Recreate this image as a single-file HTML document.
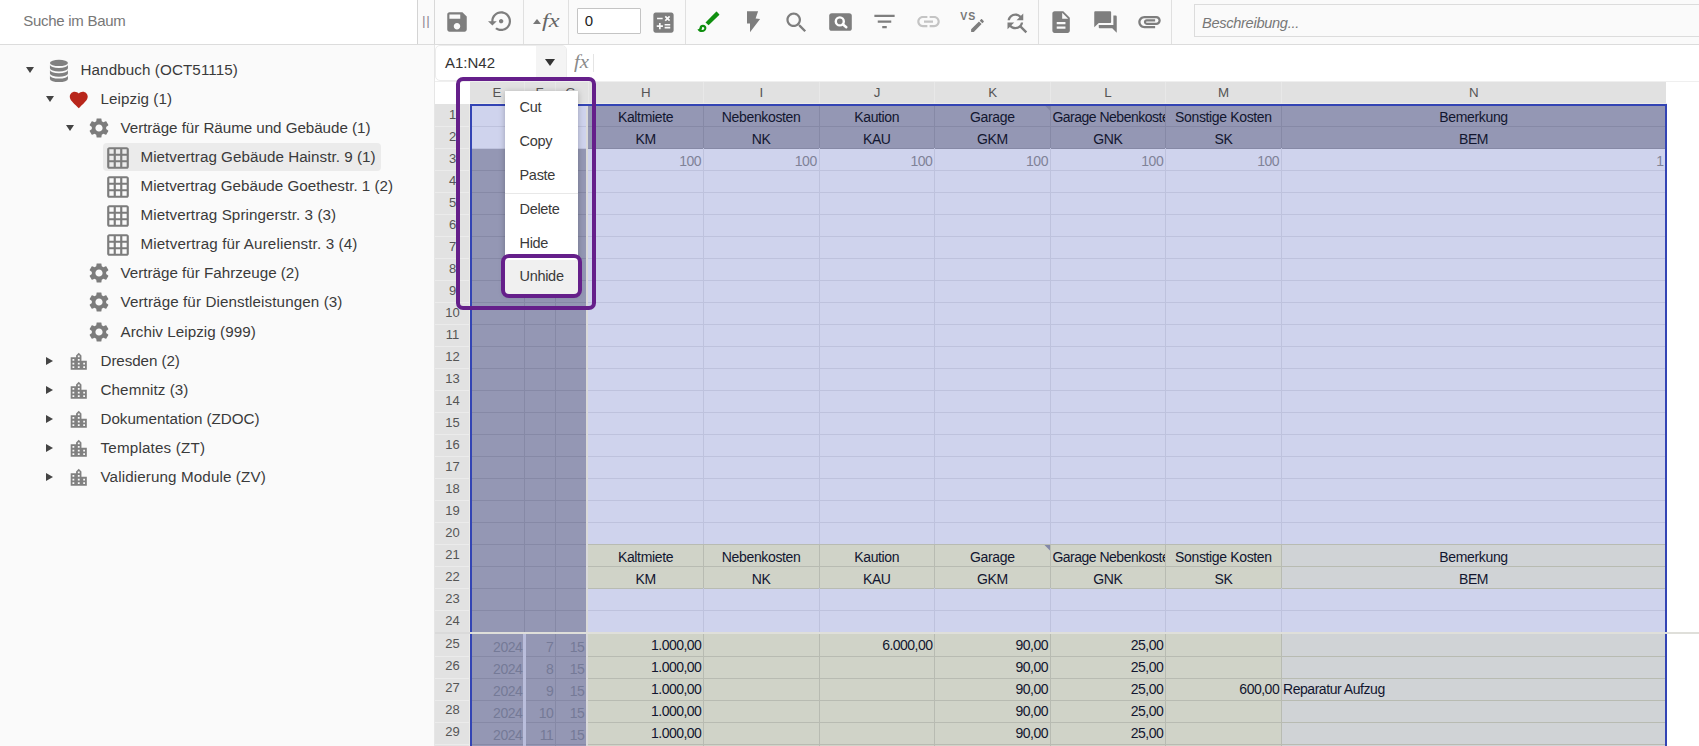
<!DOCTYPE html>
<html lang="de"><head><meta charset="utf-8"><title>Handbuch</title>
<style>
html,body{margin:0;padding:0}
body{width:1699px;height:746px;overflow:hidden;position:relative;background:#fafafa;font-family:"Liberation Sans",sans-serif;color:#333}
.abs,.ic,.t,.c,.ln{position:absolute}
.ic{display:block}
.t{white-space:nowrap;line-height:1}
.tree{font-size:15.2px;color:#3a3a3a;letter-spacing:0}
.c{white-space:nowrap;overflow:hidden;font-size:13.33px;line-height:22px;color:#12162f;box-sizing:border-box}
.hd{font-size:13.33px;color:#555;text-align:center;line-height:22px}
.mi{position:absolute;left:0;width:73px;height:34px;line-height:32px;padding-left:14.5px;box-sizing:border-box;font-size:14.5px;letter-spacing:-0.3px;color:#3a3a3a}
</style></head><body>

<div class="abs" style="left:0;top:0;width:1699px;height:44px;background:#fafafa;border-bottom:1px solid #dcdcdc"></div>
<div class="abs" style="left:0;top:0;width:417px;height:44px;background:#fff"></div>
<div class="abs" style="left:417px;top:0;width:1px;height:44px;background:#d4d4d4"></div>
<div class="abs" style="left:434px;top:45px;width:1px;height:701px;background:#e6e6e6"></div>
<div class="abs" style="left:434px;top:0;width:1px;height:44px;background:#d8d8d8"></div>
<div class="t" style="left:23.300px;top:13px;font-size:15px;letter-spacing:-0.28px;color:#777">Suche im Baum</div>
<div class="t" style="left:422.000px;top:14.000px;font-size:13.7px;color:#8e8694;letter-spacing:0.7px">||</div>
<div class="abs" style="left:523px;top:0;width:1px;height:44px;background:#e0e0e0"></div>
<div class="abs" style="left:568px;top:0;width:1px;height:44px;background:#e0e0e0"></div>
<div class="abs" style="left:685px;top:0;width:1px;height:44px;background:#e0e0e0"></div>
<div class="abs" style="left:1038px;top:0;width:1px;height:44px;background:#e0e0e0"></div>
<div class="abs" style="left:1171px;top:0;width:1px;height:44px;background:#e0e0e0"></div>
<svg class="ic" style="left:444.00px;top:9.00px;width:26px;height:26px" viewBox="0 0 24 24"><path fill="#7e7e7e" d="M17 3H5c-1.11 0-2 .9-2 2v14c0 1.1.89 2 2 2h14c1.1 0 2-.9 2-2V7l-4-4zm-5 16c-1.66 0-3-1.34-3-3s1.34-3 3-3 3 1.34 3 3-1.34 3-3 3zm3-10H5V5h10v4z"/></svg>
<svg class="ic" style="left:487.95px;top:8.45px;width:26.3px;height:26.3px" viewBox="0 0 24 24"><path fill="#7e7e7e" d="M14 12c0-1.1-.9-2-2-2s-2 .9-2 2 .9 2 2 2 2-.9 2-2zm-2-9c-4.97 0-9 4.03-9 9H0l4 4 4-4H5c0-3.87 3.13-7 7-7s7 3.13 7 7-3.13 7-7 7c-1.51 0-2.91-.49-4.06-1.3l-1.42 1.44C8.04 20.3 9.94 21 12 21c4.97 0 9-4.03 9-9s-4.03-9-9-9z"/></svg>
<div class="abs" style="left:533.3px;top:19px;width:0;height:0;border-left:4px solid transparent;border-right:4px solid transparent;border-bottom:5px solid #777"></div>
<div class="t" style="left:541.500px;top:11px;font-family:'Liberation Serif',serif;font-style:italic;font-size:19.5px;color:#666;transform:scaleX(1.25);transform-origin:0 0">fx</div>
<div class="abs" style="left:577px;top:8px;width:62px;height:24px;border:1px solid #c4c4c4;background:#fff;border-radius:1px"></div>
<div class="t" style="left:584.700px;top:13px;font-size:15px;color:#222">0</div>
<svg class="ic" style="left:649.50px;top:8.50px;width:27px;height:27px" viewBox="0 0 24 24"><path fill="#7e7e7e" d="M19 3H5c-1.1 0-2 .9-2 2v14c0 1.1.9 2 2 2h14c1.1 0 2-.9 2-2V5c0-1.1-.9-2-2-2zm-5.97 4.06L14.09 6l1.41 1.41L16.91 6l1.06 1.06-1.41 1.41 1.41 1.41-1.06 1.06-1.41-1.4-1.41 1.41-1.06-1.06 1.41-1.41-1.41-1.42zm-6.78.66h5v1.5h-5v-1.5zM11.5 16h-2v2H8v-2H6v-1.5h2v-2h1.5v2h2V16zm6.500 1.25h-5v-1.5h5v1.5zm0-2.5h-5v-1.5h5v1.5z"/></svg>
<svg class="ic" style="left:690px;top:5px;width:40px;height:35px" viewBox="0 0 40 35"><g fill="#0f8f0f"><path d="M26.1 6.800 Q26.600 6.400 27.100 6.900 L29.200 9.200 Q29.600 9.700 29.200 10.100 L18.600 20.300 L15.500 17.400 Z"/><path fill-rule="evenodd" d="M12.900 19.700 C15.100 19.700 16.400 21.300 16.400 23.100 C16.400 25.300 14.600 27.100 12.000 27.100 C9.900 27.100 8.300 26.100 7.400 24.500 C8.600 24.500 9.500 23.900 9.600 22.600 C9.700 21.000 11.000 19.700 12.900 19.700 Z M12.300 21.900 L11.500 24.900 C13.300 25.300 14.300 24.300 14.300 23.300 C14.300 22.400 13.500 21.800 12.300 21.900 Z"/></g></svg>
<svg class="ic" style="left:740px;top:5px;width:30px;height:35px" viewBox="0 0 30 35"><path fill="#7e7e7e" d="M7 6.200H18.100L15.600 13.600L20.100 14L10 27.300V18.600H7Z"/></svg>
<svg class="ic" style="left:782.50px;top:8.50px;width:27px;height:27px" viewBox="0 0 24 24"><path fill="#7e7e7e" d="M15.5 14h-.79l-.28-.27C15.41 12.59 16 11.11 16 9.5 16 5.91 13.09 3 9.5 3S3 5.91 3 9.5 5.91 16 9.5 16c1.61 0 3.09-.59 4.23-1.57l.27.28v.79l5 4.99L20.49 19l-4.99-5zm-6 0C7.01 14 5 11.99 5 9.5S7.01 5 9.5 5 14 7.01 14 9.5 11.99 14 9.5 14z"/></svg>
<svg class="ic" style="left:828px;top:10px;width:25px;height:24px" viewBox="0 0 25 24"><rect x="1.200" y="3.200" width="22.600" height="17.600" rx="2.600" fill="#7e7e7e"/><circle cx="11.800" cy="11.400" r="4" fill="none" stroke="#fff" stroke-width="2.400"/><path d="M14.800 14.300 L18.300 17.300" stroke="#fff" stroke-width="2.500" stroke-linecap="round"/></svg>
<svg class="ic" style="left:870.50px;top:8.20px;width:27px;height:27px" viewBox="0 0 24 24"><path fill="#7e7e7e" d="M10 18h4v-2h-4v2zM3 6v2h18V6H3zm3 7h12v-2H6v2z"/></svg>
<svg class="ic" style="left:914.50px;top:8.00px;width:27px;height:27px" viewBox="0 0 24 24"><path fill="#c4c4c4" d="M3.9 12c0-1.71 1.39-3.1 3.1-3.1h4V7H7c-2.76 0-5 2.24-5 5s2.24 5 5 5h4v-1.9H7c-1.71 0-3.1-1.39-3.1-3.1zM8 13h8v-2H8v2zm9-6h-4v1.9h4c1.71 0 3.1 1.39 3.1 3.1s-1.39 3.1-3.1 3.1h-4V17h4c2.76 0 5-2.24 5-5s-2.24-5-5-5z"/></svg>
<div class="t" style="left:960.300px;top:10.700px;font-size:10.5px;font-weight:bold;color:#777;letter-spacing:1px">VS</div>
<svg class="ic" style="left:969.30px;top:16.70px;width:17px;height:17px" viewBox="0 0 24 24"><path fill="#7e7e7e" d="M3 17.25V21h3.75L17.81 9.94l-3.75-3.75L3 17.25zM20.71 7.04c.39-.39.39-1.02 0-1.41l-2.34-2.34c-.39-.39-1.02-.39-1.41 0l-1.83 1.83 3.75 3.75 1.83-1.83z"/></svg>
<svg class="ic" style="left:1002.50px;top:8.50px;width:27px;height:27px" viewBox="0 0 24 24"><path fill="#7e7e7e" d="M11 6c1.38 0 2.63.56 3.54 1.46L12 10h6V4l-2.05 2.05C14.68 4.78 12.93 4 11 4c-3.53 0-6.43 2.61-6.92 6H6.1c.46-2.28 2.48-4 4.9-4zm5.64 9.14c.66-.9 1.12-1.97 1.28-3.14H15.9c-.46 2.28-2.48 4-4.9 4-1.38 0-2.63-.56-3.54-1.46L10 12H4v6l2.05-2.05C7.32 17.22 9.07 18 11 18c1.55 0 2.98-.51 4.14-1.36L20 21.49 21.49 20l-4.85-4.860z"/></svg>
<svg class="ic" style="left:1047.90px;top:8.75px;width:26.2px;height:26.2px" viewBox="0 0 24 24"><path fill="#7e7e7e" d="M14 2H6c-1.1 0-1.99.9-1.99 2L4 20c0 1.1.89 2 1.99 2H18c1.1 0 2-.9 2-2V8l-6-6zm2 16H8v-2h8v2zm0-4H8v-2h8v2zm-3-5V3.5L18.5 9H13z"/></svg>
<svg class="ic" style="left:1091.500px;top:8.700px;width:27px;height:25.8px" viewBox="0 0 24 24" preserveAspectRatio="none"><path fill="#7e7e7e" d="M21 6h-2v9H6v2c0 .55.45 1 1 1h11l4 4V7c0-.55-.45-1-1-1zm-4 6V3c0-.55-.45-1-1-1H3c-.55 0-1 .45-1 1v14l4-4h10c.55 0 1-.45 1-1z"/></svg>
<svg class="ic" style="left:1135.50px;top:8.00px;width:27px;height:27px" viewBox="0 0 24 24"><path fill="#7e7e7e" d="M2 12.5C2 9.46 4.46 7 7.5 7H18c2.21 0 4 1.79 4 4s-1.79 4-4 4H9.5C8.12 15 7 13.88 7 12.5S8.12 10 9.5 10H17v2H9.41c-.55 0-.55 1 0 1H18c1.1 0 2-.9 2-2s-.9-2-2-2H7.5C5.57 9 4 10.57 4 12.5S5.57 16 7.5 16H17v2H7.5C4.46 18 2 15.54 2 12.5z"/></svg>
<div class="abs" style="left:1194px;top:4px;width:520px;height:32.5px;border:1px solid #dcdcdc;background:#fafafa;box-sizing:border-box"></div>
<div class="t" style="left:1202px;top:16.400px;font-size:14.6px;letter-spacing:-0.3px;font-style:italic;color:#777">Beschreibung...</div>
<div class="abs" style="left:103px;top:143px;width:278px;height:28px;background:#ebebeb;border-radius:4px"></div>
<div class="abs" style="left:25.5px;top:67.0px;width:0;height:0;border-left:4.5px solid transparent;border-right:4.5px solid transparent;border-top:6.5px solid #444"></div>
<svg class="ic" style="left:44px;top:55.35px;width:32px;height:32px" viewBox="0 0 32 32"><g fill="#808080"><ellipse cx="14.94" cy="7.900" rx="9.0" ry="3.18"/><path d="M5.94 9.7 A9.0 3.18 0 0 0 23.94 9.7 L23.94 13.3 A9.0 3.18 0 0 1 5.94 13.3 Z"/><path d="M5.94 15.05 A9.0 3.18 0 0 0 23.94 15.05 L23.94 18.6 A9.0 3.18 0 0 1 5.94 18.6 Z"/><path d="M5.94 20.4 A9.0 3.18 0 0 0 23.94 20.4 L23.94 23.9 A9.0 3.18 0 0 1 5.94 23.9 Z"/></g></svg>
<div class="t tree" style="left:80.5px;top:61.6px;letter-spacing:0.097px">Handbuch (OCT51115)</div>
<div class="abs" style="left:45.5px;top:96.0px;width:0;height:0;border-left:4.5px solid transparent;border-right:4.5px solid transparent;border-top:6.5px solid #444"></div>
<svg class="ic" style="left:68.35px;top:89.05px;width:21.5px;height:21.5px" viewBox="0 0 24 24"><path fill="#b8261b" d="M12 21.35l-1.45-1.32C5.4 15.36 2 12.28 2 8.5 2 5.42 4.42 3 7.5 3c1.74 0 3.41.81 4.5 2.09C13.09 3.81 14.76 3 16.5 3 19.58 3 22 5.42 22 8.5c0 3.78-3.4 6.86-8.55 11.54L12 21.35z"/></svg>
<div class="t tree" style="left:100.5px;top:90.6px;letter-spacing:0.065px">Leipzig (1)</div>
<div class="abs" style="left:65.5px;top:125.0px;width:0;height:0;border-left:4.5px solid transparent;border-right:4.5px solid transparent;border-top:6.5px solid #444"></div>
<svg class="ic" style="left:87.00px;top:116.30px;width:24px;height:24px" viewBox="0 0 24 24"><path fill="#7c7c7c" d="M19.14 12.94c.04-.3.06-.61.06-.94 0-.32-.02-.64-.07-.94l2.03-1.58c.18-.14.23-.41.12-.61l-1.92-3.32c-.12-.22-.37-.29-.59-.22l-2.39.96c-.5-.38-1.03-.7-1.62-.94l-.36-2.54c-.04-.24-.24-.41-.48-.41h-3.84c-.24 0-.43.17-.47.41l-.36 2.54c-.59.24-1.13.57-1.62.94l-2.39-.96c-.22-.08-.47 0-.59.22L2.74 8.87c-.12.21-.08.47.12.61l2.03 1.58c-.05.3-.09.63-.09.94s.02.64.07.94l-2.03 1.58c-.18.14-.23.41-.12.61l1.92 3.32c.12.22.37.29.59.22l2.39-.96c.5.38 1.03.7 1.62.94l.36 2.54c.05.24.24.41.48.41h3.84c.24 0 .44-.17.47-.41l.36-2.54c.59-.24 1.13-.56 1.62-.94l2.39.96c.22.08.47 0 .59-.22l1.92-3.32c.12-.22.07-.47-.12-.61l-2.01-1.58zM12 15.6c-1.98 0-3.6-1.62-3.6-3.6s1.62-3.6 3.6-3.6 3.6 1.620 3.6 3.6-1.62 3.6-3.6 3.6z"/></svg>
<div class="t tree" style="left:120.5px;top:119.6px;letter-spacing:-0.050px">Verträge für Räume und Gebäude (1)</div>
<svg class="ic" style="left:104.80px;top:144.90px;width:26px;height:26px" viewBox="0 0 24 24"><path fill="#7c7c7c" d="M20 2H4c-1.1 0-2 .9-2 2v16c0 1.1.9 2 2 2h16c1.1 0 2-.9 2-2V4c0-1.1-.9-2-2-2zM8 20H4v-4h4v4zm0-6H4v-4h4v4zm0-6H4V4h4v4zm6 12h-4v-4h4v4zm0-6h-4v-4h4v4zm0-6h-4V4h4v4zm6 12h-4v-4h4v4zm0-6h-4v-4h4v4zm0-6h-4V4h4v4z"/></svg>
<div class="t tree" style="left:140.5px;top:148.6px;letter-spacing:0.037px">Mietvertrag Gebäude Hainstr. 9 (1)</div>
<svg class="ic" style="left:104.80px;top:173.90px;width:26px;height:26px" viewBox="0 0 24 24"><path fill="#7c7c7c" d="M20 2H4c-1.1 0-2 .9-2 2v16c0 1.1.9 2 2 2h16c1.1 0 2-.9 2-2V4c0-1.1-.9-2-2-2zM8 20H4v-4h4v4zm0-6H4v-4h4v4zm0-6H4V4h4v4zm6 12h-4v-4h4v4zm0-6h-4v-4h4v4zm0-6h-4V4h4v4zm6 12h-4v-4h4v4zm0-6h-4v-4h4v4zm0-6h-4V4h4v4z"/></svg>
<div class="t tree" style="left:140.5px;top:177.6px;letter-spacing:0.005px">Mietvertrag Gebäude Goethestr. 1 (2)</div>
<svg class="ic" style="left:104.80px;top:202.90px;width:26px;height:26px" viewBox="0 0 24 24"><path fill="#7c7c7c" d="M20 2H4c-1.1 0-2 .9-2 2v16c0 1.1.9 2 2 2h16c1.1 0 2-.9 2-2V4c0-1.1-.9-2-2-2zM8 20H4v-4h4v4zm0-6H4v-4h4v4zm0-6H4V4h4v4zm6 12h-4v-4h4v4zm0-6h-4v-4h4v4zm0-6h-4V4h4v4zm6 12h-4v-4h4v4zm0-6h-4v-4h4v4zm0-6h-4V4h4v4z"/></svg>
<div class="t tree" style="left:140.5px;top:206.6px;letter-spacing:0.081px">Mietvertrag Springerstr. 3 (3)</div>
<svg class="ic" style="left:104.80px;top:231.90px;width:26px;height:26px" viewBox="0 0 24 24"><path fill="#7c7c7c" d="M20 2H4c-1.1 0-2 .9-2 2v16c0 1.1.9 2 2 2h16c1.1 0 2-.9 2-2V4c0-1.1-.9-2-2-2zM8 20H4v-4h4v4zm0-6H4v-4h4v4zm0-6H4V4h4v4zm6 12h-4v-4h4v4zm0-6h-4v-4h4v4zm0-6h-4V4h4v4zm6 12h-4v-4h4v4zm0-6h-4v-4h4v4zm0-6h-4V4h4v4z"/></svg>
<div class="t tree" style="left:140.5px;top:235.6px;letter-spacing:0.127px">Mietvertrag für Aurelienstr. 3 (4)</div>
<svg class="ic" style="left:87.00px;top:261.30px;width:24px;height:24px" viewBox="0 0 24 24"><path fill="#7c7c7c" d="M19.14 12.94c.04-.3.06-.61.06-.94 0-.32-.02-.64-.07-.94l2.03-1.58c.18-.14.23-.41.12-.61l-1.92-3.32c-.12-.22-.37-.29-.59-.22l-2.39.96c-.5-.38-1.03-.7-1.62-.94l-.36-2.54c-.04-.24-.24-.41-.48-.41h-3.84c-.24 0-.43.17-.47.41l-.36 2.54c-.59.24-1.13.57-1.62.94l-2.39-.96c-.22-.08-.47 0-.59.22L2.74 8.87c-.12.21-.08.47.12.61l2.03 1.58c-.05.3-.09.63-.09.94s.02.64.07.94l-2.03 1.58c-.18.14-.23.41-.12.61l1.92 3.32c.12.22.37.29.59.22l2.39-.96c.5.38 1.03.7 1.62.94l.36 2.54c.05.24.24.41.48.41h3.84c.24 0 .44-.17.47-.41l.36-2.54c.59-.24 1.13-.56 1.62-.94l2.39.96c.22.08.47 0 .59-.22l1.92-3.32c.12-.22.07-.47-.12-.61l-2.01-1.58zM12 15.6c-1.98 0-3.6-1.62-3.6-3.6s1.62-3.6 3.6-3.6 3.6 1.620 3.6 3.6-1.62 3.6-3.6 3.6z"/></svg>
<div class="t tree" style="left:120.5px;top:264.6px;letter-spacing:-0.005px">Verträge für Fahrzeuge (2)</div>
<svg class="ic" style="left:87.00px;top:290.30px;width:24px;height:24px" viewBox="0 0 24 24"><path fill="#7c7c7c" d="M19.14 12.94c.04-.3.06-.61.06-.94 0-.32-.02-.64-.07-.94l2.03-1.58c.18-.14.23-.41.12-.61l-1.92-3.32c-.12-.22-.37-.29-.59-.22l-2.39.96c-.5-.38-1.03-.7-1.62-.94l-.36-2.54c-.04-.24-.24-.41-.48-.41h-3.84c-.24 0-.43.17-.47.41l-.36 2.54c-.59.24-1.13.57-1.62.94l-2.39-.96c-.22-.08-.47 0-.59.22L2.74 8.87c-.12.21-.08.47.12.61l2.03 1.58c-.05.3-.09.63-.09.94s.02.64.07.94l-2.03 1.58c-.18.14-.23.41-.12.61l1.92 3.32c.12.22.37.29.59.22l2.39-.96c.5.38 1.03.7 1.62.94l.36 2.54c.05.24.24.41.48.41h3.84c.24 0 .44-.17.47-.41l.36-2.54c.59-.24 1.13-.56 1.62-.94l2.39.96c.22.08.47 0 .59-.22l1.92-3.32c.12-.22.07-.47-.12-.61l-2.01-1.58zM12 15.6c-1.98 0-3.6-1.62-3.6-3.6s1.62-3.6 3.6-3.6 3.6 1.620 3.6 3.6-1.62 3.6-3.6 3.6z"/></svg>
<div class="t tree" style="left:120.5px;top:293.6px;letter-spacing:0.102px">Verträge für Dienstleistungen (3)</div>
<svg class="ic" style="left:87.00px;top:320.30px;width:24px;height:24px" viewBox="0 0 24 24"><path fill="#7c7c7c" d="M19.14 12.94c.04-.3.06-.61.06-.94 0-.32-.02-.64-.07-.94l2.03-1.58c.18-.14.23-.41.12-.61l-1.92-3.32c-.12-.22-.37-.29-.59-.22l-2.39.96c-.5-.38-1.03-.7-1.62-.94l-.36-2.54c-.04-.24-.24-.41-.48-.41h-3.84c-.24 0-.43.17-.47.41l-.36 2.54c-.59.24-1.13.57-1.62.94l-2.39-.96c-.22-.08-.47 0-.59.22L2.74 8.87c-.12.21-.08.47.12.61l2.03 1.58c-.05.3-.09.63-.09.94s.02.64.07.94l-2.03 1.58c-.18.14-.23.41-.12.61l1.92 3.32c.12.22.37.29.59.22l2.39-.96c.5.38 1.03.7 1.62.94l.36 2.54c.05.24.24.41.48.41h3.84c.24 0 .44-.17.47-.41l.36-2.54c.59-.24 1.13-.56 1.62-.94l2.39.96c.22.08.47 0 .59-.22l1.92-3.32c.12-.22.07-.47-.12-.61l-2.01-1.58zM12 15.6c-1.98 0-3.6-1.62-3.6-3.6s1.62-3.6 3.6-3.6 3.6 1.620 3.6 3.6-1.62 3.6-3.6 3.6z"/></svg>
<div class="t tree" style="left:120.5px;top:323.6px;letter-spacing:0.054px">Archiv Leipzig (999)</div>
<div class="abs" style="left:45.9px;top:356.8px;width:0;height:0;border-top:4.6px solid transparent;border-bottom:4.6px solid transparent;border-left:7.5px solid #444"></div>
<svg class="ic" style="left:68.05px;top:351.15px;width:21.5px;height:21.5px" viewBox="0 0 24 24"><path fill="#808080" d="M15 11V5l-3-3-3 3v2H3v14h18V11h-6zm-8 8H5v-2h2v2zm0-4H5v-2h2v2zm0-4H5V9h2v2zm6 8h-2v-2h2v2zm0-4h-2v-2h2v2zm0-4h-2V9h2v2zm0-4h-2V5h2v2zm6 12h-2v-2h2v2zm0-4h-2v-2h2v2z"/></svg>
<div class="t tree" style="left:100.5px;top:352.6px;letter-spacing:-0.078px">Dresden (2)</div>
<div class="abs" style="left:45.9px;top:385.8px;width:0;height:0;border-top:4.6px solid transparent;border-bottom:4.6px solid transparent;border-left:7.5px solid #444"></div>
<svg class="ic" style="left:68.05px;top:380.15px;width:21.5px;height:21.5px" viewBox="0 0 24 24"><path fill="#808080" d="M15 11V5l-3-3-3 3v2H3v14h18V11h-6zm-8 8H5v-2h2v2zm0-4H5v-2h2v2zm0-4H5V9h2v2zm6 8h-2v-2h2v2zm0-4h-2v-2h2v2zm0-4h-2V9h2v2zm0-4h-2V5h2v2zm6 12h-2v-2h2v2zm0-4h-2v-2h2v2z"/></svg>
<div class="t tree" style="left:100.5px;top:381.6px;letter-spacing:0.091px">Chemnitz (3)</div>
<div class="abs" style="left:45.9px;top:414.8px;width:0;height:0;border-top:4.6px solid transparent;border-bottom:4.6px solid transparent;border-left:7.5px solid #444"></div>
<svg class="ic" style="left:68.05px;top:409.15px;width:21.5px;height:21.5px" viewBox="0 0 24 24"><path fill="#808080" d="M15 11V5l-3-3-3 3v2H3v14h18V11h-6zm-8 8H5v-2h2v2zm0-4H5v-2h2v2zm0-4H5V9h2v2zm6 8h-2v-2h2v2zm0-4h-2v-2h2v2zm0-4h-2V9h2v2zm0-4h-2V5h2v2zm6 12h-2v-2h2v2zm0-4h-2v-2h2v2z"/></svg>
<div class="t tree" style="left:100.5px;top:410.6px;letter-spacing:-0.023px">Dokumentation (ZDOC)</div>
<div class="abs" style="left:45.9px;top:443.8px;width:0;height:0;border-top:4.6px solid transparent;border-bottom:4.6px solid transparent;border-left:7.5px solid #444"></div>
<svg class="ic" style="left:68.05px;top:438.15px;width:21.5px;height:21.5px" viewBox="0 0 24 24"><path fill="#808080" d="M15 11V5l-3-3-3 3v2H3v14h18V11h-6zm-8 8H5v-2h2v2zm0-4H5v-2h2v2zm0-4H5V9h2v2zm6 8h-2v-2h2v2zm0-4h-2v-2h2v2zm0-4h-2V9h2v2zm0-4h-2V5h2v2zm6 12h-2v-2h2v2zm0-4h-2v-2h2v2z"/></svg>
<div class="t tree" style="left:100.5px;top:439.6px;letter-spacing:0.185px">Templates (ZT)</div>
<div class="abs" style="left:45.9px;top:472.8px;width:0;height:0;border-top:4.6px solid transparent;border-bottom:4.6px solid transparent;border-left:7.5px solid #444"></div>
<svg class="ic" style="left:68.05px;top:467.15px;width:21.5px;height:21.5px" viewBox="0 0 24 24"><path fill="#808080" d="M15 11V5l-3-3-3 3v2H3v14h18V11h-6zm-8 8H5v-2h2v2zm0-4H5v-2h2v2zm0-4H5V9h2v2zm6 8h-2v-2h2v2zm0-4h-2v-2h2v2zm0-4h-2V9h2v2zm0-4h-2V5h2v2zm6 12h-2v-2h2v2zm0-4h-2v-2h2v2z"/></svg>
<div class="t tree" style="left:100.5px;top:468.6px;letter-spacing:0.118px">Validierung Module (ZV)</div>
<div class="abs" style="left:435px;top:45px;width:1264px;height:701px;background:#fff"></div>
<div class="abs" style="left:435px;top:45px;width:132px;height:36px;box-sizing:border-box;border:1px solid #ececec;border-radius:5px;background:#fff;overflow:hidden"><div class="abs" style="left:100px;top:0;width:32px;height:36px;background:#f4f4f4"></div></div>
<div class="t" style="left:445px;top:55px;font-size:15px;color:#333">A1:N42</div>
<div class="abs" style="left:544.700px;top:59.300px;width:0;height:0;border-left:5.3px solid transparent;border-right:5.3px solid transparent;border-top:7px solid #333"></div>
<div class="t" style="left:573.500px;top:53px;font-family:'Liberation Serif',serif;font-style:italic;font-size:18px;color:#8a8a8a;transform:scaleX(1.15);transform-origin:0 0">fx</div>
<div class="abs" style="left:593px;top:54px;width:1px;height:18px;background:#e4e4e4"></div>
<div class="abs" style="left:435px;top:81px;width:1264px;height:1px;background:#efefef"></div>
<div class="abs" style="left:470px;top:81.500px;width:1196px;height:22.5px;background:#e1e1e1"></div>
<div class="c hd" style="left:470px;top:81.6px;width:54px;">E</div>
<div class="c hd" style="left:524px;top:81.6px;width:31px;">F</div>
<div class="abs" style="left:523.5px;top:82px;width:1px;height:22px;background:#e8e8e8"></div>
<div class="c hd" style="left:555px;top:81.6px;width:31px;">G</div>
<div class="abs" style="left:554.5px;top:82px;width:1px;height:22px;background:#e8e8e8"></div>
<div class="c hd" style="left:588px;top:81.6px;width:115.60000000000002px;">H</div>
<div class="abs" style="left:587.5px;top:82px;width:1px;height:22px;background:#e8e8e8"></div>
<div class="c hd" style="left:703.6px;top:81.6px;width:115.60000000000002px;">I</div>
<div class="abs" style="left:703.1px;top:82px;width:1px;height:22px;background:#e8e8e8"></div>
<div class="c hd" style="left:819.2px;top:81.6px;width:115.59999999999991px;">J</div>
<div class="abs" style="left:818.7px;top:82px;width:1px;height:22px;background:#e8e8e8"></div>
<div class="c hd" style="left:934.8px;top:81.6px;width:115.60000000000014px;">K</div>
<div class="abs" style="left:934.3px;top:82px;width:1px;height:22px;background:#e8e8e8"></div>
<div class="c hd" style="left:1050.4px;top:81.6px;width:115.29999999999995px;">L</div>
<div class="abs" style="left:1049.9px;top:82px;width:1px;height:22px;background:#e8e8e8"></div>
<div class="c hd" style="left:1165.7px;top:81.6px;width:115.89999999999986px;">M</div>
<div class="abs" style="left:1165.2px;top:82px;width:1px;height:22px;background:#e8e8e8"></div>
<div class="c hd" style="left:1281.6px;top:81.6px;width:384.4000000000001px;">N</div>
<div class="abs" style="left:1281.1px;top:82px;width:1px;height:22px;background:#e8e8e8"></div>
<div class="abs" style="left:435px;top:104px;width:35px;height:642px;background:#e2e2e2"></div>
<div class="c hd" style="left:435px;top:103.8px;width:35px;font-size:13px">1</div>
<div class="abs" style="left:435px;top:125.8px;width:35px;height:1px;background:#ebebeb"></div>
<div class="c hd" style="left:435px;top:125.8px;width:35px;font-size:13px">2</div>
<div class="abs" style="left:435px;top:147.8px;width:35px;height:1px;background:#ebebeb"></div>
<div class="c hd" style="left:435px;top:147.8px;width:35px;font-size:13px">3</div>
<div class="abs" style="left:435px;top:169.8px;width:35px;height:1px;background:#ebebeb"></div>
<div class="c hd" style="left:435px;top:169.8px;width:35px;font-size:13px">4</div>
<div class="abs" style="left:435px;top:191.8px;width:35px;height:1px;background:#ebebeb"></div>
<div class="c hd" style="left:435px;top:191.8px;width:35px;font-size:13px">5</div>
<div class="abs" style="left:435px;top:213.8px;width:35px;height:1px;background:#ebebeb"></div>
<div class="c hd" style="left:435px;top:213.8px;width:35px;font-size:13px">6</div>
<div class="abs" style="left:435px;top:235.8px;width:35px;height:1px;background:#ebebeb"></div>
<div class="c hd" style="left:435px;top:235.8px;width:35px;font-size:13px">7</div>
<div class="abs" style="left:435px;top:257.8px;width:35px;height:1px;background:#ebebeb"></div>
<div class="c hd" style="left:435px;top:257.8px;width:35px;font-size:13px">8</div>
<div class="abs" style="left:435px;top:279.8px;width:35px;height:1px;background:#ebebeb"></div>
<div class="c hd" style="left:435px;top:279.8px;width:35px;font-size:13px">9</div>
<div class="abs" style="left:435px;top:301.8px;width:35px;height:1px;background:#ebebeb"></div>
<div class="c hd" style="left:435px;top:301.8px;width:35px;font-size:13px">10</div>
<div class="abs" style="left:435px;top:323.8px;width:35px;height:1px;background:#ebebeb"></div>
<div class="c hd" style="left:435px;top:323.8px;width:35px;font-size:13px">11</div>
<div class="abs" style="left:435px;top:345.8px;width:35px;height:1px;background:#ebebeb"></div>
<div class="c hd" style="left:435px;top:345.8px;width:35px;font-size:13px">12</div>
<div class="abs" style="left:435px;top:367.8px;width:35px;height:1px;background:#ebebeb"></div>
<div class="c hd" style="left:435px;top:367.8px;width:35px;font-size:13px">13</div>
<div class="abs" style="left:435px;top:389.8px;width:35px;height:1px;background:#ebebeb"></div>
<div class="c hd" style="left:435px;top:389.8px;width:35px;font-size:13px">14</div>
<div class="abs" style="left:435px;top:411.8px;width:35px;height:1px;background:#ebebeb"></div>
<div class="c hd" style="left:435px;top:411.8px;width:35px;font-size:13px">15</div>
<div class="abs" style="left:435px;top:433.8px;width:35px;height:1px;background:#ebebeb"></div>
<div class="c hd" style="left:435px;top:433.8px;width:35px;font-size:13px">16</div>
<div class="abs" style="left:435px;top:455.8px;width:35px;height:1px;background:#ebebeb"></div>
<div class="c hd" style="left:435px;top:455.8px;width:35px;font-size:13px">17</div>
<div class="abs" style="left:435px;top:477.8px;width:35px;height:1px;background:#ebebeb"></div>
<div class="c hd" style="left:435px;top:477.8px;width:35px;font-size:13px">18</div>
<div class="abs" style="left:435px;top:499.8px;width:35px;height:1px;background:#ebebeb"></div>
<div class="c hd" style="left:435px;top:499.8px;width:35px;font-size:13px">19</div>
<div class="abs" style="left:435px;top:521.8px;width:35px;height:1px;background:#ebebeb"></div>
<div class="c hd" style="left:435px;top:521.8px;width:35px;font-size:13px">20</div>
<div class="abs" style="left:435px;top:543.8px;width:35px;height:1px;background:#ebebeb"></div>
<div class="c hd" style="left:435px;top:543.8px;width:35px;font-size:13px">21</div>
<div class="abs" style="left:435px;top:565.8px;width:35px;height:1px;background:#ebebeb"></div>
<div class="c hd" style="left:435px;top:565.8px;width:35px;font-size:13px">22</div>
<div class="abs" style="left:435px;top:587.8px;width:35px;height:1px;background:#ebebeb"></div>
<div class="c hd" style="left:435px;top:587.8px;width:35px;font-size:13px">23</div>
<div class="abs" style="left:435px;top:609.8px;width:35px;height:1px;background:#ebebeb"></div>
<div class="c hd" style="left:435px;top:609.8px;width:35px;font-size:13px">24</div>
<div class="c hd" style="left:435px;top:633.3px;width:35px;font-size:13px">25</div>
<div class="abs" style="left:435px;top:656.0px;width:35px;height:1px;background:#ebebeb"></div>
<div class="c hd" style="left:435px;top:655.3px;width:35px;font-size:13px">26</div>
<div class="abs" style="left:435px;top:678.0px;width:35px;height:1px;background:#ebebeb"></div>
<div class="c hd" style="left:435px;top:677.3px;width:35px;font-size:13px">27</div>
<div class="abs" style="left:435px;top:700.0px;width:35px;height:1px;background:#ebebeb"></div>
<div class="c hd" style="left:435px;top:699.3px;width:35px;font-size:13px">28</div>
<div class="abs" style="left:435px;top:722.0px;width:35px;height:1px;background:#ebebeb"></div>
<div class="c hd" style="left:435px;top:721.3px;width:35px;font-size:13px">29</div>
<div class="abs" style="left:435px;top:744.0px;width:35px;height:1px;background:#ebebeb"></div>
<div class="c hd" style="left:435px;top:743.3px;width:35px;font-size:13px">30</div>
<div class="abs" style="left:435px;top:766.0px;width:35px;height:1px;background:#ebebeb"></div>
<div class="abs" style="left:470px;top:104px;width:1196px;height:528px;background:#cfd3ed"></div>
<div class="abs" style="left:470px;top:148.0px;width:116px;height:484.0px;background:#9497b4"></div>
<div class="abs" style="left:588px;top:104px;width:1078px;height:44.0px;background:#9497b4"></div>
<div class="abs" style="left:588px;top:544.0px;width:693.5999999999999px;height:44.0px;background:#d0d3c8"></div>
<div class="abs" style="left:1281.6px;top:544.0px;width:384.4000000000001px;height:44.0px;background:#d0d3d6"></div>
<div class="abs" style="left:470px;top:634px;width:116px;height:112px;background:#9497b4"></div>
<div class="abs" style="left:588px;top:634px;width:693.5999999999999px;height:112px;background:#d0d3c8"></div>
<div class="abs" style="left:1281.6px;top:634px;width:384.4000000000001px;height:112px;background:#d0d3d6"></div>
<div class="abs" style="left:585.7px;top:104px;width:2.5px;height:642px;background:#d9d9d9"></div>
<div class="abs" style="left:470px;top:125.8px;width:116px;height:1.0px;background:#bec2dd"></div>
<div class="abs" style="left:588px;top:125.8px;width:1078px;height:1.0px;background:#8689a6"></div>
<div class="abs" style="left:470px;top:147.8px;width:116px;height:1.0px;background:#bec2dd"></div>
<div class="abs" style="left:588px;top:147.8px;width:1078px;height:1.0px;background:#8689a6"></div>
<div class="abs" style="left:470px;top:169.8px;width:116px;height:1.0px;background:#8689a6"></div>
<div class="abs" style="left:588px;top:169.8px;width:1078px;height:1.0px;background:#bec2dd"></div>
<div class="abs" style="left:470px;top:191.8px;width:116px;height:1.0px;background:#8689a6"></div>
<div class="abs" style="left:588px;top:191.8px;width:1078px;height:1.0px;background:#bec2dd"></div>
<div class="abs" style="left:470px;top:213.8px;width:116px;height:1.0px;background:#8689a6"></div>
<div class="abs" style="left:588px;top:213.8px;width:1078px;height:1.0px;background:#bec2dd"></div>
<div class="abs" style="left:470px;top:235.8px;width:116px;height:1.0px;background:#8689a6"></div>
<div class="abs" style="left:588px;top:235.8px;width:1078px;height:1.0px;background:#bec2dd"></div>
<div class="abs" style="left:470px;top:257.8px;width:116px;height:1.0px;background:#8689a6"></div>
<div class="abs" style="left:588px;top:257.8px;width:1078px;height:1.0px;background:#bec2dd"></div>
<div class="abs" style="left:470px;top:279.8px;width:116px;height:1.0px;background:#8689a6"></div>
<div class="abs" style="left:588px;top:279.8px;width:1078px;height:1.0px;background:#bec2dd"></div>
<div class="abs" style="left:470px;top:301.8px;width:116px;height:1.0px;background:#8689a6"></div>
<div class="abs" style="left:588px;top:301.8px;width:1078px;height:1.0px;background:#bec2dd"></div>
<div class="abs" style="left:470px;top:323.8px;width:116px;height:1.0px;background:#8689a6"></div>
<div class="abs" style="left:588px;top:323.8px;width:1078px;height:1.0px;background:#bec2dd"></div>
<div class="abs" style="left:470px;top:345.8px;width:116px;height:1.0px;background:#8689a6"></div>
<div class="abs" style="left:588px;top:345.8px;width:1078px;height:1.0px;background:#bec2dd"></div>
<div class="abs" style="left:470px;top:367.8px;width:116px;height:1.0px;background:#8689a6"></div>
<div class="abs" style="left:588px;top:367.8px;width:1078px;height:1.0px;background:#bec2dd"></div>
<div class="abs" style="left:470px;top:389.8px;width:116px;height:1.0px;background:#8689a6"></div>
<div class="abs" style="left:588px;top:389.8px;width:1078px;height:1.0px;background:#bec2dd"></div>
<div class="abs" style="left:470px;top:411.8px;width:116px;height:1.0px;background:#8689a6"></div>
<div class="abs" style="left:588px;top:411.8px;width:1078px;height:1.0px;background:#bec2dd"></div>
<div class="abs" style="left:470px;top:433.8px;width:116px;height:1.0px;background:#8689a6"></div>
<div class="abs" style="left:588px;top:433.8px;width:1078px;height:1.0px;background:#bec2dd"></div>
<div class="abs" style="left:470px;top:455.8px;width:116px;height:1.0px;background:#8689a6"></div>
<div class="abs" style="left:588px;top:455.8px;width:1078px;height:1.0px;background:#bec2dd"></div>
<div class="abs" style="left:470px;top:477.8px;width:116px;height:1.0px;background:#8689a6"></div>
<div class="abs" style="left:588px;top:477.8px;width:1078px;height:1.0px;background:#bec2dd"></div>
<div class="abs" style="left:470px;top:499.8px;width:116px;height:1.0px;background:#8689a6"></div>
<div class="abs" style="left:588px;top:499.8px;width:1078px;height:1.0px;background:#bec2dd"></div>
<div class="abs" style="left:470px;top:521.8px;width:116px;height:1.0px;background:#8689a6"></div>
<div class="abs" style="left:588px;top:521.8px;width:1078px;height:1.0px;background:#bec2dd"></div>
<div class="abs" style="left:470px;top:543.8px;width:116px;height:1.0px;background:#8689a6"></div>
<div class="abs" style="left:588px;top:543.8px;width:1078px;height:1.0px;background:#b8bbb2"></div>
<div class="abs" style="left:470px;top:565.8px;width:116px;height:1.0px;background:#8689a6"></div>
<div class="abs" style="left:588px;top:565.8px;width:1078px;height:1.0px;background:#b8bbb2"></div>
<div class="abs" style="left:470px;top:587.8px;width:116px;height:1.0px;background:#8689a6"></div>
<div class="abs" style="left:588px;top:587.8px;width:1078px;height:1.0px;background:#b8bbb2"></div>
<div class="abs" style="left:470px;top:609.8px;width:116px;height:1.0px;background:#8689a6"></div>
<div class="abs" style="left:588px;top:609.8px;width:1078px;height:1.0px;background:#bec2dd"></div>
<div class="abs" style="left:470px;top:656.0px;width:116px;height:1.0px;background:#8689a6"></div>
<div class="abs" style="left:588px;top:656.0px;width:1078px;height:1.0px;background:#b8bbb2"></div>
<div class="abs" style="left:470px;top:678.0px;width:116px;height:1.0px;background:#8689a6"></div>
<div class="abs" style="left:588px;top:678.0px;width:1078px;height:1.0px;background:#b8bbb2"></div>
<div class="abs" style="left:470px;top:700.0px;width:116px;height:1.0px;background:#8689a6"></div>
<div class="abs" style="left:588px;top:700.0px;width:1078px;height:1.0px;background:#b8bbb2"></div>
<div class="abs" style="left:470px;top:722.0px;width:116px;height:1.0px;background:#8689a6"></div>
<div class="abs" style="left:588px;top:722.0px;width:1078px;height:1.0px;background:#b8bbb2"></div>
<div class="abs" style="left:470px;top:744.0px;width:116px;height:1.0px;background:#8689a6"></div>
<div class="abs" style="left:588px;top:744.0px;width:1078px;height:1.0px;background:#b8bbb2"></div>
<div class="abs" style="left:523.5px;top:104px;width:1.0px;height:44.0px;background:#bec2dd"></div>
<div class="abs" style="left:523.5px;top:148.0px;width:1.0px;height:396.0px;background:#8689a6"></div>
<div class="abs" style="left:523.5px;top:544.0px;width:1.0px;height:44.0px;background:#8689a6"></div>
<div class="abs" style="left:523.5px;top:588.0px;width:1.0px;height:44.0px;background:#8689a6"></div>
<div class="abs" style="left:523.5px;top:634.2px;width:1.0px;height:111.79999999999995px;background:#8689a6"></div>
<div class="abs" style="left:554.5px;top:104px;width:1.0px;height:44.0px;background:#bec2dd"></div>
<div class="abs" style="left:554.5px;top:148.0px;width:1.0px;height:396.0px;background:#8689a6"></div>
<div class="abs" style="left:554.5px;top:544.0px;width:1.0px;height:44.0px;background:#8689a6"></div>
<div class="abs" style="left:554.5px;top:588.0px;width:1.0px;height:44.0px;background:#8689a6"></div>
<div class="abs" style="left:554.5px;top:634.2px;width:1.0px;height:111.79999999999995px;background:#8689a6"></div>
<div class="abs" style="left:703.1px;top:104px;width:1.0px;height:44.0px;background:#8689a6"></div>
<div class="abs" style="left:703.1px;top:148.0px;width:1.0px;height:396.0px;background:#bec2dd"></div>
<div class="abs" style="left:703.1px;top:544.0px;width:1.0px;height:44.0px;background:#b8bbb2"></div>
<div class="abs" style="left:703.1px;top:588.0px;width:1.0px;height:44.0px;background:#bec2dd"></div>
<div class="abs" style="left:703.1px;top:634.2px;width:1.0px;height:111.79999999999995px;background:#b8bbb2"></div>
<div class="abs" style="left:818.7px;top:104px;width:1.0px;height:44.0px;background:#8689a6"></div>
<div class="abs" style="left:818.7px;top:148.0px;width:1.0px;height:396.0px;background:#bec2dd"></div>
<div class="abs" style="left:818.7px;top:544.0px;width:1.0px;height:44.0px;background:#b8bbb2"></div>
<div class="abs" style="left:818.7px;top:588.0px;width:1.0px;height:44.0px;background:#bec2dd"></div>
<div class="abs" style="left:818.7px;top:634.2px;width:1.0px;height:111.79999999999995px;background:#b8bbb2"></div>
<div class="abs" style="left:934.3px;top:104px;width:1.0px;height:44.0px;background:#8689a6"></div>
<div class="abs" style="left:934.3px;top:148.0px;width:1.0px;height:396.0px;background:#bec2dd"></div>
<div class="abs" style="left:934.3px;top:544.0px;width:1.0px;height:44.0px;background:#b8bbb2"></div>
<div class="abs" style="left:934.3px;top:588.0px;width:1.0px;height:44.0px;background:#bec2dd"></div>
<div class="abs" style="left:934.3px;top:634.2px;width:1.0px;height:111.79999999999995px;background:#b8bbb2"></div>
<div class="abs" style="left:1049.9px;top:104px;width:1.0px;height:44.0px;background:#8689a6"></div>
<div class="abs" style="left:1049.9px;top:148.0px;width:1.0px;height:396.0px;background:#bec2dd"></div>
<div class="abs" style="left:1049.9px;top:544.0px;width:1.0px;height:44.0px;background:#b8bbb2"></div>
<div class="abs" style="left:1049.9px;top:588.0px;width:1.0px;height:44.0px;background:#bec2dd"></div>
<div class="abs" style="left:1049.9px;top:634.2px;width:1.0px;height:111.79999999999995px;background:#b8bbb2"></div>
<div class="abs" style="left:1165.2px;top:104px;width:1.0px;height:44.0px;background:#8689a6"></div>
<div class="abs" style="left:1165.2px;top:148.0px;width:1.0px;height:396.0px;background:#bec2dd"></div>
<div class="abs" style="left:1165.2px;top:544.0px;width:1.0px;height:44.0px;background:#b8bbb2"></div>
<div class="abs" style="left:1165.2px;top:588.0px;width:1.0px;height:44.0px;background:#bec2dd"></div>
<div class="abs" style="left:1165.2px;top:634.2px;width:1.0px;height:111.79999999999995px;background:#b8bbb2"></div>
<div class="abs" style="left:1281.1px;top:104px;width:1.0px;height:44.0px;background:#8689a6"></div>
<div class="abs" style="left:1281.1px;top:148.0px;width:1.0px;height:396.0px;background:#bec2dd"></div>
<div class="abs" style="left:1281.1px;top:544.0px;width:1.0px;height:44.0px;background:#b8bbb2"></div>
<div class="abs" style="left:1281.1px;top:588.0px;width:1.0px;height:44.0px;background:#bec2dd"></div>
<div class="abs" style="left:1281.1px;top:634.2px;width:1.0px;height:111.79999999999995px;background:#b8bbb2"></div>
<div class="abs" style="left:522.8px;top:634.2px;width:3.300000000000068px;height:111.79999999999995px;background:#babedc"></div>
<div class="c" style="left:588px;top:106.0px;width:115.10000000000002px;text-align:center;color:#12162f;letter-spacing:-0.35px;font-size:14px;">Kaltmiete</div>
<div class="c" style="left:588px;top:128.0px;width:115.10000000000002px;text-align:center;color:#12162f;letter-spacing:-0.4px;font-size:14px;">KM</div>
<div class="c" style="left:703.6px;top:106.0px;width:115.10000000000002px;text-align:center;color:#12162f;letter-spacing:-0.35px;font-size:14px;">Nebenkosten</div>
<div class="c" style="left:703.6px;top:128.0px;width:115.10000000000002px;text-align:center;color:#12162f;letter-spacing:-0.4px;font-size:14px;">NK</div>
<div class="c" style="left:819.2px;top:106.0px;width:115.09999999999991px;text-align:center;color:#12162f;letter-spacing:-0.35px;font-size:14px;">Kaution</div>
<div class="c" style="left:819.2px;top:128.0px;width:115.09999999999991px;text-align:center;color:#12162f;letter-spacing:-0.4px;font-size:14px;">KAU</div>
<div class="c" style="left:934.8px;top:106.0px;width:115.10000000000014px;text-align:center;color:#12162f;letter-spacing:-0.35px;font-size:14px;">Garage</div>
<div class="c" style="left:934.8px;top:128.0px;width:115.10000000000014px;text-align:center;color:#12162f;letter-spacing:-0.4px;font-size:14px;">GKM</div>
<div class="c" style="left:1050.4px;top:106.0px;width:114.29999999999995px;padding-left:2px;font-size:14px;letter-spacing:-0.5px">Garage Nebenkosten</div>
<div class="c" style="left:1050.4px;top:128.0px;width:114.79999999999995px;text-align:center;color:#12162f;letter-spacing:-0.4px;font-size:14px;">GNK</div>
<div class="c" style="left:1165.7px;top:106.0px;width:115.39999999999986px;text-align:center;color:#12162f;letter-spacing:-0.35px;font-size:14px;">Sonstige Kosten</div>
<div class="c" style="left:1165.7px;top:128.0px;width:115.39999999999986px;text-align:center;color:#12162f;letter-spacing:-0.4px;font-size:14px;">SK</div>
<div class="c" style="left:1281.6px;top:106.0px;width:383.9000000000001px;text-align:center;color:#12162f;letter-spacing:-0.35px;font-size:14px;">Bemerkung</div>
<div class="c" style="left:1281.6px;top:128.0px;width:383.9000000000001px;text-align:center;color:#12162f;letter-spacing:-0.4px;font-size:14px;">BEM</div>
<div class="abs" style="left:1044.2px;top:104.8px;width:6px;height:6px;background:#8286a3;clip-path:polygon(0 0,100% 0,100% 100%)"></div>
<div class="c" style="left:588px;top:546.0px;width:115.10000000000002px;text-align:center;color:#12162f;letter-spacing:-0.35px;font-size:14px;">Kaltmiete</div>
<div class="c" style="left:588px;top:568.0px;width:115.10000000000002px;text-align:center;color:#12162f;letter-spacing:-0.4px;font-size:14px;">KM</div>
<div class="c" style="left:703.6px;top:546.0px;width:115.10000000000002px;text-align:center;color:#12162f;letter-spacing:-0.35px;font-size:14px;">Nebenkosten</div>
<div class="c" style="left:703.6px;top:568.0px;width:115.10000000000002px;text-align:center;color:#12162f;letter-spacing:-0.4px;font-size:14px;">NK</div>
<div class="c" style="left:819.2px;top:546.0px;width:115.09999999999991px;text-align:center;color:#12162f;letter-spacing:-0.35px;font-size:14px;">Kaution</div>
<div class="c" style="left:819.2px;top:568.0px;width:115.09999999999991px;text-align:center;color:#12162f;letter-spacing:-0.4px;font-size:14px;">KAU</div>
<div class="c" style="left:934.8px;top:546.0px;width:115.10000000000014px;text-align:center;color:#12162f;letter-spacing:-0.35px;font-size:14px;">Garage</div>
<div class="c" style="left:934.8px;top:568.0px;width:115.10000000000014px;text-align:center;color:#12162f;letter-spacing:-0.4px;font-size:14px;">GKM</div>
<div class="c" style="left:1050.4px;top:546.0px;width:114.29999999999995px;padding-left:2px;font-size:14px;letter-spacing:-0.5px">Garage Nebenkosten</div>
<div class="c" style="left:1050.4px;top:568.0px;width:114.79999999999995px;text-align:center;color:#12162f;letter-spacing:-0.4px;font-size:14px;">GNK</div>
<div class="c" style="left:1165.7px;top:546.0px;width:115.39999999999986px;text-align:center;color:#12162f;letter-spacing:-0.35px;font-size:14px;">Sonstige Kosten</div>
<div class="c" style="left:1165.7px;top:568.0px;width:115.39999999999986px;text-align:center;color:#12162f;letter-spacing:-0.4px;font-size:14px;">SK</div>
<div class="c" style="left:1281.6px;top:546.0px;width:383.9000000000001px;text-align:center;color:#12162f;letter-spacing:-0.35px;font-size:14px;">Bemerkung</div>
<div class="c" style="left:1281.6px;top:568.0px;width:383.9000000000001px;text-align:center;color:#12162f;letter-spacing:-0.4px;font-size:14px;">BEM</div>
<div class="abs" style="left:1044.2px;top:544.8px;width:6px;height:6px;background:#8388a8;clip-path:polygon(0 0,100% 0,100% 100%)"></div>
<div class="c" style="left:588px;top:150.1px;width:115.10000000000002px;text-align:right;color:#7f8298;padding:0 1.9px;letter-spacing:-0.45px;font-size:14px;">100</div>
<div class="c" style="left:703.6px;top:150.1px;width:115.10000000000002px;text-align:right;color:#7f8298;padding:0 1.9px;letter-spacing:-0.45px;font-size:14px;">100</div>
<div class="c" style="left:819.2px;top:150.1px;width:115.09999999999991px;text-align:right;color:#7f8298;padding:0 1.9px;letter-spacing:-0.45px;font-size:14px;">100</div>
<div class="c" style="left:934.8px;top:150.1px;width:115.10000000000014px;text-align:right;color:#7f8298;padding:0 1.9px;letter-spacing:-0.45px;font-size:14px;">100</div>
<div class="c" style="left:1050.4px;top:150.1px;width:114.79999999999995px;text-align:right;color:#7f8298;padding:0 1.9px;letter-spacing:-0.45px;font-size:14px;">100</div>
<div class="c" style="left:1165.7px;top:150.1px;width:115.39999999999986px;text-align:right;color:#7f8298;padding:0 1.9px;letter-spacing:-0.45px;font-size:14px;">100</div>
<div class="c" style="left:1281.6px;top:150.1px;width:383.9000000000001px;text-align:right;color:#7f8298;padding:0 1.9px;letter-spacing:-0.45px;font-size:14px;">1</div>
<div class="c" style="left:470px;top:636.2px;width:53.5px;text-align:right;color:#757a97;padding:0 1.1px;letter-spacing:-0.45px;font-size:14px;">2024</div>
<div class="c" style="left:524px;top:636.2px;width:30.5px;text-align:right;color:#757a97;padding:0 1.1px;letter-spacing:-0.45px;font-size:14px;">7</div>
<div class="c" style="left:555px;top:636.2px;width:30.5px;text-align:right;color:#757a97;padding:0 1.1px;letter-spacing:-0.45px;font-size:14px;">15</div>
<div class="c" style="left:588px;top:634.4000000000001px;width:115.10000000000002px;text-align:right;color:#12162f;padding:0 1.9px;letter-spacing:-0.55px;font-size:14px;">1.000,00</div>
<div class="c" style="left:819.2px;top:634.4000000000001px;width:115.09999999999991px;text-align:right;color:#12162f;padding:0 1.9px;letter-spacing:-0.55px;font-size:14px;">6.000,00</div>
<div class="c" style="left:934.8px;top:634.4000000000001px;width:115.10000000000014px;text-align:right;color:#12162f;padding:0 1.9px;letter-spacing:-0.5px;font-size:14px;">90,00</div>
<div class="c" style="left:1050.4px;top:634.4000000000001px;width:114.79999999999995px;text-align:right;color:#12162f;padding:0 1.9px;letter-spacing:-0.5px;font-size:14px;">25,00</div>
<div class="c" style="left:470px;top:658.2px;width:53.5px;text-align:right;color:#757a97;padding:0 1.1px;letter-spacing:-0.45px;font-size:14px;">2024</div>
<div class="c" style="left:524px;top:658.2px;width:30.5px;text-align:right;color:#757a97;padding:0 1.1px;letter-spacing:-0.45px;font-size:14px;">8</div>
<div class="c" style="left:555px;top:658.2px;width:30.5px;text-align:right;color:#757a97;padding:0 1.1px;letter-spacing:-0.45px;font-size:14px;">15</div>
<div class="c" style="left:588px;top:656.4000000000001px;width:115.10000000000002px;text-align:right;color:#12162f;padding:0 1.9px;letter-spacing:-0.55px;font-size:14px;">1.000,00</div>
<div class="c" style="left:934.8px;top:656.4000000000001px;width:115.10000000000014px;text-align:right;color:#12162f;padding:0 1.9px;letter-spacing:-0.5px;font-size:14px;">90,00</div>
<div class="c" style="left:1050.4px;top:656.4000000000001px;width:114.79999999999995px;text-align:right;color:#12162f;padding:0 1.9px;letter-spacing:-0.5px;font-size:14px;">25,00</div>
<div class="c" style="left:470px;top:680.2px;width:53.5px;text-align:right;color:#757a97;padding:0 1.1px;letter-spacing:-0.45px;font-size:14px;">2024</div>
<div class="c" style="left:524px;top:680.2px;width:30.5px;text-align:right;color:#757a97;padding:0 1.1px;letter-spacing:-0.45px;font-size:14px;">9</div>
<div class="c" style="left:555px;top:680.2px;width:30.5px;text-align:right;color:#757a97;padding:0 1.1px;letter-spacing:-0.45px;font-size:14px;">15</div>
<div class="c" style="left:588px;top:678.4000000000001px;width:115.10000000000002px;text-align:right;color:#12162f;padding:0 1.9px;letter-spacing:-0.55px;font-size:14px;">1.000,00</div>
<div class="c" style="left:934.8px;top:678.4000000000001px;width:115.10000000000014px;text-align:right;color:#12162f;padding:0 1.9px;letter-spacing:-0.5px;font-size:14px;">90,00</div>
<div class="c" style="left:1050.4px;top:678.4000000000001px;width:114.79999999999995px;text-align:right;color:#12162f;padding:0 1.9px;letter-spacing:-0.5px;font-size:14px;">25,00</div>
<div class="c" style="left:1165.7px;top:678.4000000000001px;width:115.39999999999986px;text-align:right;color:#12162f;padding:0 1.9px;letter-spacing:-0.5px;font-size:14px;">600,00</div>
<div class="c" style="left:1281.6px;top:677.9000000000001px;width:383.9000000000001px;text-align:left;color:#12162f;padding:0 1.4px;letter-spacing:-0.45px;font-size:14px;">Reparatur Aufzug</div>
<div class="c" style="left:470px;top:702.2px;width:53.5px;text-align:right;color:#757a97;padding:0 1.1px;letter-spacing:-0.45px;font-size:14px;">2024</div>
<div class="c" style="left:524px;top:702.2px;width:30.5px;text-align:right;color:#757a97;padding:0 1.1px;letter-spacing:-0.45px;font-size:14px;">10</div>
<div class="c" style="left:555px;top:702.2px;width:30.5px;text-align:right;color:#757a97;padding:0 1.1px;letter-spacing:-0.45px;font-size:14px;">15</div>
<div class="c" style="left:588px;top:700.4000000000001px;width:115.10000000000002px;text-align:right;color:#12162f;padding:0 1.9px;letter-spacing:-0.55px;font-size:14px;">1.000,00</div>
<div class="c" style="left:934.8px;top:700.4000000000001px;width:115.10000000000014px;text-align:right;color:#12162f;padding:0 1.9px;letter-spacing:-0.5px;font-size:14px;">90,00</div>
<div class="c" style="left:1050.4px;top:700.4000000000001px;width:114.79999999999995px;text-align:right;color:#12162f;padding:0 1.9px;letter-spacing:-0.5px;font-size:14px;">25,00</div>
<div class="c" style="left:470px;top:724.2px;width:53.5px;text-align:right;color:#757a97;padding:0 1.1px;letter-spacing:-0.45px;font-size:14px;">2024</div>
<div class="c" style="left:524px;top:724.2px;width:30.5px;text-align:right;color:#757a97;padding:0 1.1px;letter-spacing:-0.45px;font-size:14px;">11</div>
<div class="c" style="left:555px;top:724.2px;width:30.5px;text-align:right;color:#757a97;padding:0 1.1px;letter-spacing:-0.45px;font-size:14px;">15</div>
<div class="c" style="left:588px;top:722.4000000000001px;width:115.10000000000002px;text-align:right;color:#12162f;padding:0 1.9px;letter-spacing:-0.55px;font-size:14px;">1.000,00</div>
<div class="c" style="left:934.8px;top:722.4000000000001px;width:115.10000000000014px;text-align:right;color:#12162f;padding:0 1.9px;letter-spacing:-0.5px;font-size:14px;">90,00</div>
<div class="c" style="left:1050.4px;top:722.4000000000001px;width:114.79999999999995px;text-align:right;color:#12162f;padding:0 1.9px;letter-spacing:-0.5px;font-size:14px;">25,00</div>
<div class="c" style="left:470px;top:746.2px;width:53.5px;text-align:right;color:#757a97;padding:0 1.1px;letter-spacing:-0.45px;font-size:14px;">2024</div>
<div class="c" style="left:524px;top:746.2px;width:30.5px;text-align:right;color:#757a97;padding:0 1.1px;letter-spacing:-0.45px;font-size:14px;">12</div>
<div class="c" style="left:555px;top:746.2px;width:30.5px;text-align:right;color:#757a97;padding:0 1.1px;letter-spacing:-0.45px;font-size:14px;">15</div>
<div class="c" style="left:588px;top:744.4000000000001px;width:115.10000000000002px;text-align:right;color:#12162f;padding:0 1.9px;letter-spacing:-0.55px;font-size:14px;">1.000,00</div>
<div class="c" style="left:934.8px;top:744.4000000000001px;width:115.10000000000014px;text-align:right;color:#12162f;padding:0 1.9px;letter-spacing:-0.5px;font-size:14px;">90,00</div>
<div class="c" style="left:1050.4px;top:744.4000000000001px;width:114.79999999999995px;text-align:right;color:#12162f;padding:0 1.9px;letter-spacing:-0.5px;font-size:14px;">25,00</div>
<div class="abs" style="left:469px;top:103px;width:1198px;height:1px;background:#ecebe6"></div>
<div class="abs" style="left:469px;top:103px;width:1px;height:643px;background:#ecebe6"></div>
<div class="abs" style="left:470px;top:104px;width:1197px;height:2px;background:#3344b4"></div>
<div class="abs" style="left:470px;top:104px;width:2px;height:642px;background:#3344b4"></div>
<div class="abs" style="left:1665px;top:104px;width:2px;height:642px;background:#3344b4"></div>
<div class="abs" style="left:470px;top:632px;width:1229px;height:2.2000000000000455px;background:#dfdfda"></div>
<div class="abs" style="left:435px;top:632px;width:35px;height:2.2000000000000455px;background:#dadada"></div>
<div class="abs" style="left:435px;top:82px;width:35px;height:22px;background:#fff"></div>
<div class="abs" style="left:505px;top:91px;width:73px;height:203px;background:#fff;box-shadow:0 1px 6px rgba(0,0,0,.25)"><div class="mi" style="top:0">Cut</div><div class="mi" style="top:34px">Copy</div><div class="mi" style="top:68px">Paste</div><div class="abs" style="left:0;top:101.5px;width:73px;height:1px;background:#e8e8e8"></div><div class="mi" style="top:102px">Delete</div><div class="mi" style="top:136px">Hide</div><div class="mi" style="top:169px;background:#f0f0f0">Unhide</div></div>
<div class="abs" style="left:455.800px;top:77px;width:140.2px;height:233px;box-sizing:border-box;border:4px solid #651f8a;border-radius:7px"></div>
<div class="abs" style="left:501px;top:254px;width:81px;height:44px;box-sizing:border-box;border:4px solid #651f8a;border-radius:8px"></div>
</body></html>
